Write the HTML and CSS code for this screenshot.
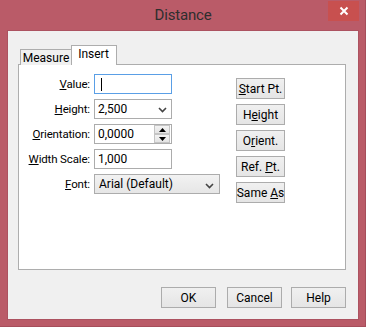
FILE: index.html
```html
<!DOCTYPE html>
<html>
<head>
<meta charset="utf-8">
<link rel="stylesheet" href="styles.css">
</head>
<body>
<div class="window">
  <div class="titlebar">
    <span class="title">Distance</span>
    <div class="close">
      <svg width="10" height="10" viewBox="0 0 10 10"><path d="M1.5 1.5 L8.5 8.5 M8.5 1.5 L1.5 8.5" stroke="#fff" stroke-width="2" fill="none"/></svg>
    </div>
  </div>
  <div class="client">
    <div class="tabs">
      <div class="tab">Measure</div>
      <div class="tab active">Insert</div>
    </div>
    <div class="panel">
      <div class="form">
        <div class="label"><u>V</u>alue:</div>
        <div class="field input focus"><span class="caret"></span></div>

        <div class="label"><u>H</u>eight:</div>
        <div class="field input combo"><span>2,500</span>
          <svg class="chev" width="9" height="6" viewBox="0 0 9 6"><path d="M1 1 L4.5 4.5 L8 1" stroke="#444" stroke-width="1.6" fill="none"/></svg>
        </div>

        <div class="label"><u>O</u>rientation:</div>
        <div class="field input spinfield"><span>0,0000</span>
          <div class="spin">
            <div class="spin-btn"><svg width="7" height="4" viewBox="0 0 7 4"><path d="M0 4 L3.5 0 L7 4 Z" fill="#000"/></svg></div>
            <div class="spin-btn"><svg width="7" height="4" viewBox="0 0 7 4"><path d="M0 0 L3.5 4 L7 0 Z" fill="#000"/></svg></div>
          </div>
        </div>

        <div class="label"><u>W</u>idth Scale:</div>
        <div class="field input"><span>1,000</span></div>

        <div class="label"><u>F</u>ont:</div>
        <div class="field select"><span>Arial (Default)</span>
          <svg class="chev" width="9" height="6" viewBox="0 0 9 6"><path d="M1 1 L4.5 4.5 L8 1" stroke="#444" stroke-width="1.6" fill="none"/></svg>
        </div>
      </div>
      <div class="side">
        <div class="btn side-btn"><span><u>S</u>tart Pt.</span></div>
        <div class="btn side-btn"><span>H<u>e</u>ight</span></div>
        <div class="btn side-btn"><span>O<u>r</u>ient.</span></div>
        <div class="btn side-btn"><span>Ref. <u>P</u>t.</span></div>
        <div class="btn side-btn"><span>Same <u>A</u>s</span></div>
      </div>
    </div>
    <div class="footer">
      <div class="btn foot-btn ok"><span>OK</span></div>
      <div class="btn foot-btn cancel"><span>Cancel</span></div>
      <div class="btn foot-btn"><span>Help</span></div>
    </div>
  </div>
</div>
</body>
</html>
```
FILE: styles.css
```css
* { box-sizing: border-box; }
html, body { margin: 0; padding: 0; background: #ba5b68; }
body { font-family: Roboto, "Noto Sans", sans-serif; font-size: 12px; color: #000; }

.window {
  width: 366px;
  height: 327px;
  background: #ba5b68;
  border-right: 1px solid #a64e5b;
  border-bottom: 1px solid #a64e5b;
  display: flex;
  flex-direction: column;
}

.titlebar {
  height: 31px;
  position: relative;
  display: flex;
  justify-content: center;
}
.title {
  font-size: 15px;
  letter-spacing: -0.2px;
  color: #2e2e2e;
  line-height: 31px;
  padding-left: 1px;
}
.close {
  position: absolute;
  left: 328px;
  top: 1px;
  width: 31px;
  height: 20px;
  background: #c8504f;
  display: flex;
  align-items: center;
  justify-content: center;
}

.client {
  margin-left: 8px;
  width: 350px;
  height: 288px;
  background: #f0f0f0;
  box-shadow: 0 0 0 1px #ac5260;
  padding: 14px 12px 0 10px;
}

.tabs {
  display: flex;
  align-items: flex-end;
  margin-left: 2px;
  height: 20px;
  position: relative;
  z-index: 1;
}
.tab {
  height: 16px;
  border: 1px solid #adadad;
  border-right: none;
  border-bottom: none;
  background: #f0f0f0;
  width: 51px;
  line-height: 16px;
  text-align: center;
  color: #000;
}
.tab.active {
  height: 20px;
  width: 46px;
  border-right: 1px solid #adadad;
  background: #fff;
  line-height: 17px;
  padding-right: 1px;
}

.panel {
  width: 328px;
  height: 206px;
  margin-top: -1px;
  border: 1px solid #adadad;
  background: #fff;
  display: flex;
  align-items: flex-start;
  padding-top: 9px;
}

.form {
  display: grid;
  grid-template-columns: 71px auto;
  grid-auto-rows: 20px;
  column-gap: 4px;
  row-gap: 5px;
  align-items: center;
}
.label {
  text-align: right;
  line-height: 20px;
  white-space: nowrap;
  font-size: 11.5px;
  letter-spacing: -0.15px;
}
.field {
  height: 20px;
  border: 1px solid #acacac;
  display: flex;
  align-items: center;
  position: relative;
  white-space: nowrap;
}
.input {
  width: 78px;
  background: #fff;
  padding-left: 3px;
}
.input.focus { border-color: #5a9fe6; }
.caret {
  width: 1px;
  height: 13px;
  background: #000;
  margin-left: 3px;
}
.chev {
  position: absolute;
  right: 4px;
  top: 7px;
}
.select {
  width: 126px;
  background: linear-gradient(#f2f2f2, #e6e6e6);
  padding-left: 4px;
}
.select .chev { right: 5px; top: 8px; }

.spin {
  position: absolute;
  right: 0px;
  top: 0px;
  width: 17px;
  height: 18px;
  display: flex;
  flex-direction: column;
  padding: 0 1px 0 0;
}
.spin-btn {
  flex: 1;
  border: 1px solid #c4c4c4;
  background: linear-gradient(#f3f3f3, #e4e4e4);
  display: flex;
  align-items: center;
  justify-content: center;
}

.side {
  margin-left: 16px;
  margin-top: 4px;
  display: flex;
  flex-direction: column;
  gap: 5px;
}
.btn {
  border: 1px solid #acacac;
  background: linear-gradient(#f0f0f0, #e5e5e5);
  display: flex;
  align-items: center;
  justify-content: center;
  white-space: nowrap;
}
.side-btn {
  width: 49px;
  height: 21px;
}

.footer {
  display: flex;
  justify-content: flex-end;
  margin-top: 17px;
}
.foot-btn {
  width: 55px;
  height: 21px;
}
.foot-btn.ok { margin-right: 11px; }
.foot-btn.cancel { margin-right: 9px; }
```
